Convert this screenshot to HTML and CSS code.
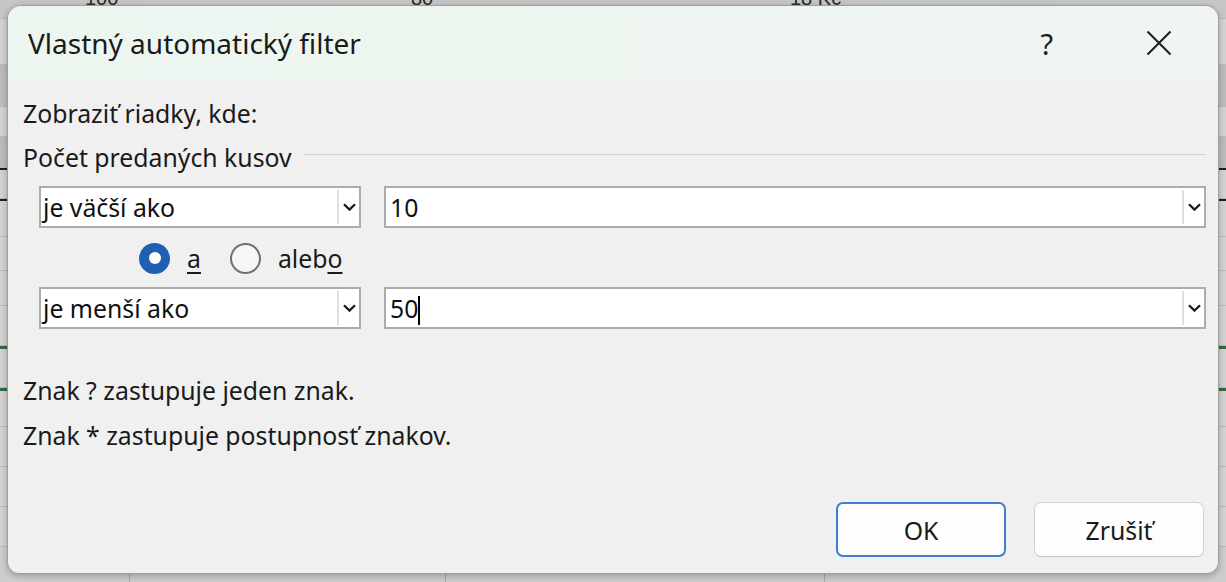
FILE: index.html
```html
<!DOCTYPE html>
<html lang="sk">
<head>
  <meta charset="UTF-8" />
  <title>Vlastný automatický filter</title>
  <link rel="stylesheet" href="styles.css">
</head>
<body>
  <!-- hárok v pozadí -->
  <div class="sheet">
    <div class="row row-top">
      <span class="num n1">100</span>
      <span class="num n2">80</span>
      <span class="num n3">18 Kč</span>
    </div>
    <div class="row light h46"></div>
    <div class="row dark h42"></div>
    <div class="row light h30"></div>
    <div class="row dark h31"></div>
    <div class="row light h31 black-top"></div>
    <div class="row light h38 black-top"></div>
    <div class="row light h34"></div>
    <div class="row light h35"></div>
    <div class="row light h40"></div>
    <div class="row light h42 green-top"></div>
    <div class="row light h39 green-top"></div>
    <div class="row light h40"></div>
    <div class="row light h40"></div>
    <div class="row light h40"></div>
  </div>

  <div class="dialog">
    <div class="titlebar">
      <span class="title">Vlastný automatický filter</span>
      <span class="help">?</span>
      <span class="close">
        <svg width="26" height="26" viewBox="0 0 26 26">
          <path d="M1.5 1.5 L24.5 24.5 M24.5 1.5 L1.5 24.5" stroke="#1c1c1c" stroke-width="2" fill="none"/>
        </svg>
      </span>
    </div>

    <div class="content">
      <p class="lead">Zobraziť riadky, kde:</p>

      <div class="group-label">
        <span>Počet predaných kusov</span>
        <span class="rule"></span>
      </div>

      <div class="crit-row first">
        <div class="combo op">
          <span class="value">je väčší ako</span>
          <span class="drop">
            <svg width="13" height="8" viewBox="0 0 13 8"><path d="M1 1.2 L6.5 6.6 L12 1.2" stroke="#1c1c1c" stroke-width="2.3" fill="none"/></svg>
          </span>
        </div>
        <div class="combo val">
          <span class="value num-val">10</span>
          <span class="drop">
            <svg width="13" height="8" viewBox="0 0 13 8"><path d="M1 1.2 L6.5 6.6 L12 1.2" stroke="#1c1c1c" stroke-width="2.3" fill="none"/></svg>
          </span>
        </div>
      </div>

      <div class="radios">
        <span class="radio on"></span>
        <span class="radio-label"><u>a</u></span>
        <span class="radio off"></span>
        <span class="radio-label">aleb<u>o</u></span>
      </div>

      <div class="crit-row">
        <div class="combo op">
          <span class="value">je menší ako</span>
          <span class="drop">
            <svg width="13" height="8" viewBox="0 0 13 8"><path d="M1 1.2 L6.5 6.6 L12 1.2" stroke="#1c1c1c" stroke-width="2.3" fill="none"/></svg>
          </span>
        </div>
        <div class="combo val">
          <span class="value num-val">50<span class="caret"></span></span>
          <span class="drop">
            <svg width="13" height="8" viewBox="0 0 13 8"><path d="M1 1.2 L6.5 6.6 L12 1.2" stroke="#1c1c1c" stroke-width="2.3" fill="none"/></svg>
          </span>
        </div>
      </div>

      <p class="hint first-hint">Znak ? zastupuje jeden znak.</p>
      <p class="hint">Znak * zastupuje postupnosť znakov.</p>

      <div class="actions">
        <button class="btn primary">OK</button>
        <button class="btn">Zrušiť</button>
      </div>
    </div>
  </div>
</body>
</html>
```

FILE: styles.css
```css
body {
  margin: 0;
  background-color: #cdcdcd;
  overflow: hidden;
  font-family: 'Noto Sans', 'Open Sans', sans-serif;
  color: #1a1a1a;
}

/* Hárok za dialógom */
.sheet {
  height: 582px;
  overflow: hidden;
  background:
    linear-gradient(90deg, transparent 129px, #a9a9a9 129px, #a9a9a9 130px, transparent 130px),
    linear-gradient(90deg, transparent 445px, #a9a9a9 445px, #a9a9a9 446px, transparent 446px),
    linear-gradient(90deg, transparent 824px, #a9a9a9 824px, #a9a9a9 825px, transparent 825px);
}

.row {
  box-sizing: border-box;
  border-bottom: 1px solid #b9b9b9;
}

.row-top {
  height: 19px;
  position: relative;
  background: #c6c6c6;
  font-family: 'Liberation Sans', sans-serif;
  font-size: 20px;
  color: #2a2a2a;
}

.num {
  position: absolute;
  top: -12px;
  line-height: 20px;
}
.n1 { left: 85px; }
.n2 { left: 411px; }
.n3 { left: 790px; }

.light { background: #d3d3d3; }
.dark { background: #bcbcbc; }

.h30 { height: 30px; }
.h31 { height: 31px; }
.h34 { height: 34px; }
.h35 { height: 35px; }
.h38 { height: 38px; }
.h39 { height: 39px; }
.h40 { height: 40px; }
.h42 { height: 42px; }
.h46 { height: 46px; }

.black-top { border-top: 2px solid #1e1e1e; }
.green-top { border-top: 3px solid #2f6b43; }

/* Dialóg */
.dialog {
  position: absolute;
  top: 5px;
  left: 7px;
  width: 1212px;
  height: 569px;
  box-sizing: border-box;
  display: flex;
  flex-direction: column;
  background: #f0f0f0;
  border: 1px solid #9e9e9e;
  border-radius: 14px 14px 12px 12px;
  box-shadow: 0 2px 6px rgba(0, 0, 0, 0.25);
  overflow: hidden;
}

.titlebar {
  height: 74px;
  flex-shrink: 0;
  display: flex;
  align-items: center;
  padding-left: 20px;
  background: linear-gradient(90deg, #ecf6ef 0%, #eef5f0 55%, #f0f4f2 100%);
}

.title {
  flex: 1;
  font-size: 28px;
  color: #1a1a1a;
}

.help {
  font-size: 29px;
  margin-right: 93px;
  color: #1a1a1a;
}

.close {
  display: flex;
  margin-right: 46px;
}

.content {
  flex: 1;
  display: flex;
  flex-direction: column;
  padding: 0 12px 0 15px;
  font-size: 24.8px;
  line-height: 28px;
}

.lead {
  margin: 19px 0 0;
}

.group-label {
  display: flex;
  align-items: center;
  gap: 12px;
  margin-top: 16px;
}

.group-label .rule {
  flex: 1;
  height: 1px;
  background: #d3d3d3;
  margin-top: -6px;
}

.crit-row {
  display: flex;
  gap: 23px;
  padding-left: 16px;
  margin-top: 13px;
}

.crit-row.first {
  margin-top: 15px;
}

.combo {
  height: 42px;
  box-sizing: border-box;
  display: flex;
  background: #fff;
  border: 2px solid #acacac;
}

.combo.op { width: 322px; }
.combo.val { flex: 1; }

.combo .value {
  flex: 1;
  padding-left: 2px;
  line-height: 38px;
  color: #111;
}

.combo .num-val {
  padding-left: 4px;
}

.combo .drop {
  width: 20px;
  margin: 2px 0;
  border-left: 2px solid #dedede;
  display: flex;
  align-items: center;
  justify-content: center;
}

.caret {
  display: inline-block;
  width: 2px;
  height: 29px;
  background: #000;
  vertical-align: -7px;
}

.radios {
  display: flex;
  align-items: center;
  height: 32px;
  margin-top: 14px;
  padding-left: 116px;
}

.radio {
  width: 31px;
  height: 31px;
  box-sizing: border-box;
  border-radius: 50%;
  display: flex;
  align-items: center;
  justify-content: center;
}

.radio.on {
  background: #1f60b4;
}

.radio.on::after {
  content: "";
  width: 12px;
  height: 12px;
  border-radius: 50%;
  background: #fff;
}

.radio.off {
  border: 2px solid #707070;
  background: #f6f6f6;
  margin-left: 29px;
}

.radio-label {
  margin-left: 17px;
}

.radio-label u {
  text-decoration-thickness: 2px;
  text-underline-offset: 4px;
}

.hint {
  margin: 17px 0 0;
}

.hint.first-hint {
  margin-top: 47px;
}

.actions {
  display: flex;
  justify-content: flex-end;
  gap: 28px;
  margin-top: 53px;
  padding-right: 2px;
}

.btn {
  width: 170px;
  height: 55px;
  box-sizing: border-box;
  background: #fdfdfd;
  border: 1.5px solid #d3d3d3;
  border-bottom-color: #c4c4c4;
  border-radius: 7px;
  font-family: 'Noto Sans', 'Open Sans', sans-serif;
  font-size: 24.8px;
  color: #1a1a1a;
}

.btn.primary {
  border: 2px solid #3c7fd2;
}
```
